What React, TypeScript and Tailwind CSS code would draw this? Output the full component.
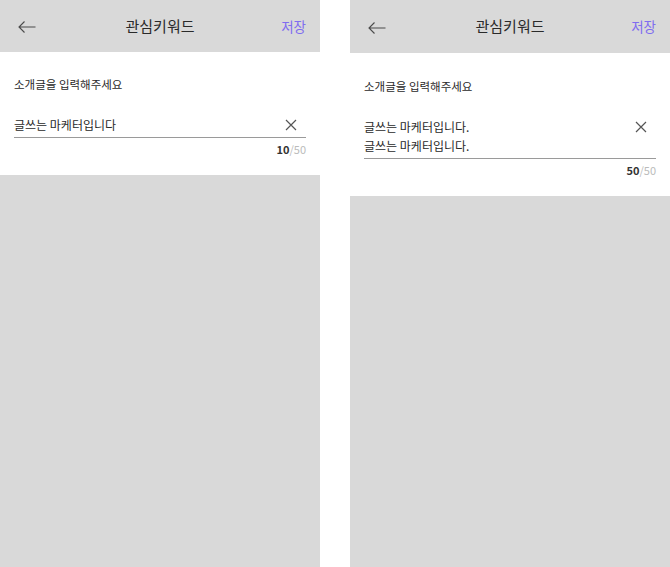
import { useState } from 'react'

type PanelProps = {
  lines: string[]
  headerH: string
  topPad: string
}

function Panel({ lines, headerH, topPad }: PanelProps) {
  const [text] = useState(lines.join('\n'))
  const count = text.replace(/\n/g, '').length

  return (
    <div className="w-[320px] h-[567px] flex flex-col bg-[#d9d9d9]">
      {/* Header */}
      <div className={`${headerH} flex items-center justify-between px-[18px] relative`}>
        <svg width="18" height="12" viewBox="0 0 18 12" fill="none" className="mt-[2px]">
          <path d="M17.5 6H1M6.5 0.5L1 6l5.5 5.5" stroke="#4a4a4a" strokeWidth="1.1" />
        </svg>
        <span className="absolute left-1/2 -translate-x-1/2 text-[15px] text-[#2a2a2a]">관심키워드</span>
        <span className="text-[13.5px] text-[#7f6cf0] -mr-[4px]">저장</span>
      </div>

      {/* Body */}
      <div className={`bg-white px-[14px] ${topPad} pb-[18px]`}>
        <div className="text-[11.5px] leading-[18px] text-[#2a2a2a]">소개글을 입력해주세요</div>
        <div className="mt-[22px] flex items-start justify-between border-b border-[#9a9a9a] pb-[3px]">
          <div className="text-[12px] leading-[19px] text-[#2a2a2a]">
            {lines.map((l, i) => (
              <div key={i}>{l}</div>
            ))}
          </div>
          <svg width="12" height="12" viewBox="0 0 12 12" className="mt-[4px] mr-[9px]">
            <path d="M1 1l10 10M11 1L1 11" stroke="#555" strokeWidth="1.2" />
          </svg>
        </div>
        <div className="mt-[3px] text-right text-[11px] leading-[16px]">
          <span className="font-bold text-[#333]">{count === 10 ? 10 : 50}</span>
          <span className="text-[#bbb]">/50</span>
        </div>
      </div>
    </div>
  )
}

export default function App() {
  return (
    <div
      className="w-[670px] h-[567px] flex gap-[30px] bg-white overflow-hidden"
      style={{ fontFamily: '"Noto Sans CJK KR", "Noto Sans", sans-serif' }}
    >
      <Panel lines={['글쓰는 마케터입니다']} headerH="h-[52px]" topPad="pt-[23px]" />
      <Panel lines={['글쓰는 마케터입니다.', '글쓰는 마케터입니다.']} headerH="h-[53px]" topPad="pt-[24px]" />
    </div>
  )
}
